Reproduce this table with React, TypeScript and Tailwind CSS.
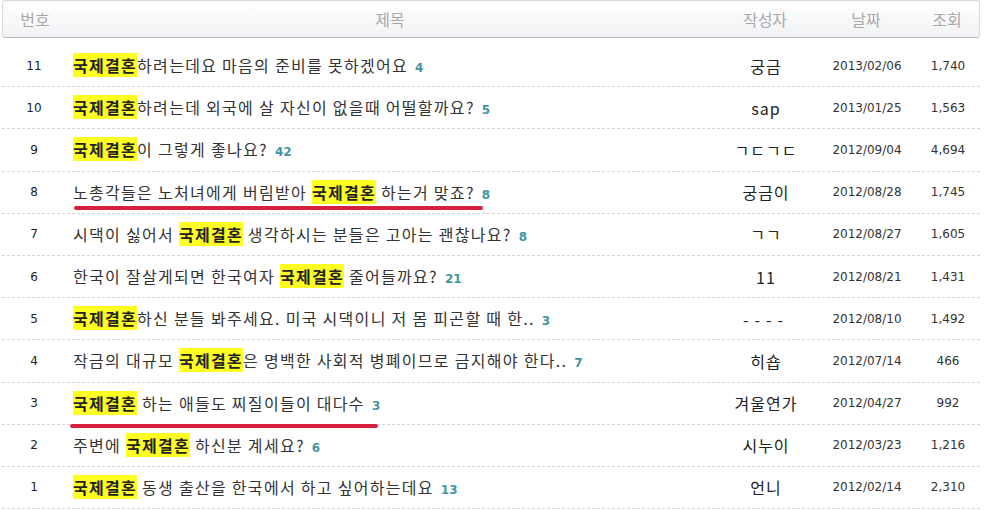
import React from 'react';

type Post = {
  no: number;
  before?: string;
  after?: string;
  comments: number;
  author: string;
  date: string;
  views: string;
};

const posts: Post[] = [
  { no: 11, after: '하려는데요 마음의 준비를 못하겠어요', comments: 4, author: '궁금', date: '2013/02/06', views: '1,740' },
  { no: 10, after: '하려는데 외국에 살 자신이 없을때 어떨할까요?', comments: 5, author: 'sap', date: '2013/01/25', views: '1,563' },
  { no: 9, after: '이 그렇게 좋나요?', comments: 42, author: 'ㄱㄷㄱㄷ', date: '2012/09/04', views: '4,694' },
  { no: 8, before: '노총각들은 노처녀에게 버림받아 ', after: ' 하는거 맞죠?', comments: 8, author: '궁금이', date: '2012/08/28', views: '1,745' },
  { no: 7, before: '시댁이 싫어서 ', after: ' 생각하시는 분들은 고아는 괜찮나요?', comments: 8, author: 'ㄱㄱ', date: '2012/08/27', views: '1,605' },
  { no: 6, before: '한국이 잘살게되면 한국여자 ', after: ' 줄어들까요?', comments: 21, author: '11', date: '2012/08/21', views: '1,431' },
  { no: 5, after: '하신 분들 봐주세요. 미국 시댁이니 저 몸 피곤할 때 한..', comments: 3, author: '----', date: '2012/08/10', views: '1,492' },
  { no: 4, before: '작금의 대규모 ', after: '은 명백한 사회적 병폐이므로 금지해야 한다..', comments: 7, author: '히숍', date: '2012/07/14', views: '466' },
  { no: 3, after: ' 하는 애들도 찌질이들이 대다수', comments: 3, author: '겨울연가', date: '2012/04/27', views: '992' },
  { no: 2, before: '주변에 ', after: ' 하신분 계세요?', comments: 6, author: '시누이', date: '2012/03/23', views: '1,216' },
  { no: 1, after: ' 동생 출산을 한국에서 하고 싶어하는데요', comments: 13, author: '언니', date: '2012/02/14', views: '2,310' },
];

const kr = "font-['Noto_Sans_CJK_KR','Noto_Sans',sans-serif]";
const num = "font-['DejaVu_Sans','Liberation_Sans',sans-serif]";

function Row({ post }: { post: Post }) {
  return (
    <div className="flex h-[42.2px] items-center border-b border-dashed border-[#d4d4d4]">
      <div className={`w-[64px] text-center text-[12px] text-[#222] ${num}`}>{post.no}</div>
      <div className={`flex-1 pl-[7px] text-[16px] leading-none text-[#333] whitespace-pre ${kr}`}>
        <span className="tracking-[1.3px]">
          {post.before}
          <span className="bg-[#ffff22] font-bold text-[#222]">국제결혼</span>
          {post.after}
        </span>
        <span className={`ml-[7px] text-[12px] font-bold text-[#3f979d] ${num}`}>{post.comments}</span>
      </div>
      <div
        className={`w-[104px] text-center text-[16px] leading-none text-[#222] ${kr} ${
          post.author === '----' ? 'tracking-[6px]' : 'tracking-[1px]'
        }`}
      >
        {post.author}
      </div>
      <div className={`w-[98px] text-center text-[12px] text-[#333] ${num}`}>{post.date}</div>
      <div className={`w-[64px] text-center text-[12px] text-[#333] ${num}`}>{post.views}</div>
    </div>
  );
}

export default function App() {
  return (
    <div className="relative h-[511px] w-[999px] overflow-hidden bg-white">
      <div className="ml-[2px] w-[978px]">
        <div
          className={`mb-[7px] flex h-[38px] items-center rounded-[3px] border border-[#d6d9dd] border-b-[#b7bcc2] bg-gradient-to-b from-white to-[#f1f2f4] text-[16px] text-[#a8a8a8] ${kr}`}
        >
          <div className="w-[64px] text-center">번호</div>
          <div className="flex-1 text-center">제목</div>
          <div className="w-[104px] text-center">작성자</div>
          <div className="w-[98px] text-center">날짜</div>
          <div className="w-[64px] text-center">조회</div>
        </div>
        {posts.map((p) => (
          <Row key={p.no} post={p} />
        ))}
      </div>
      {/* red marker lines drawn over the list */}
      <div className="absolute left-[74px] top-[206px] h-[4px] w-[409px] rounded-full bg-[#d6213a]" />
      <div className="absolute left-[70px] top-[424px] h-[4px] w-[308px] rounded-full bg-[#d6213a]" />
    </div>
  );
}
